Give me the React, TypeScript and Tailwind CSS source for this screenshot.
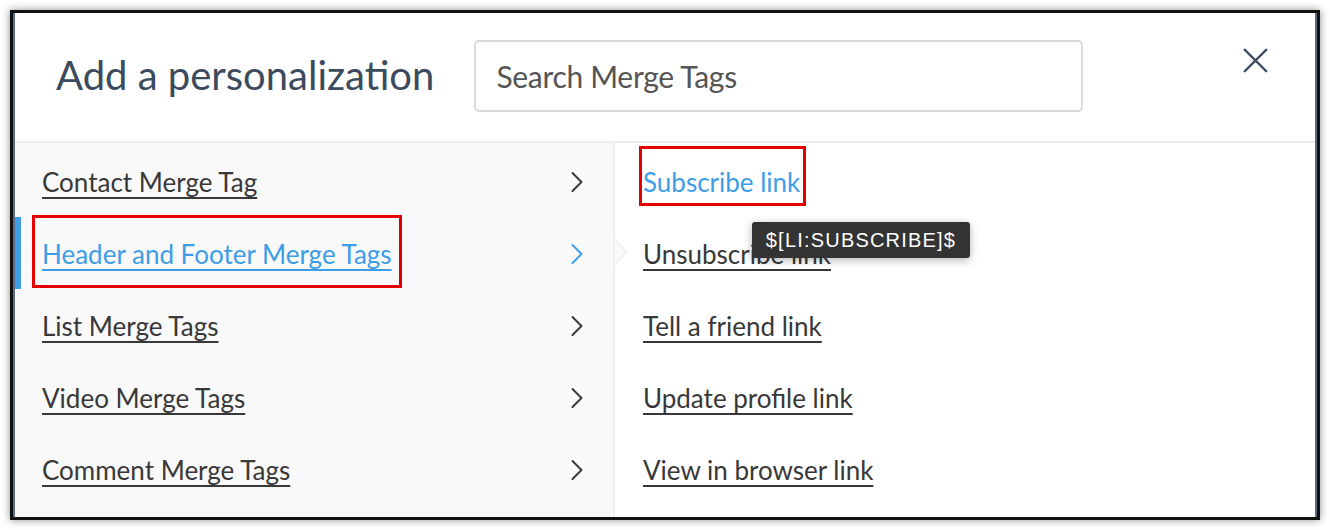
import React from 'react';
import { ChevronRight, X } from 'lucide-react';

const groups = [
  'Contact Merge Tag',
  'Header and Footer Merge Tags',
  'List Merge Tags',
  'Video Merge Tags',
  'Comment Merge Tags',
];

const links = [
  'Subscribe link',
  'Unsubscribe link',
  'Tell a friend link',
  'Update profile link',
  'View in browser link',
];

export default function App() {
  return (
    <div className="w-[1330px] h-[530px] bg-white p-[10px] font-['Lato',sans-serif]">
      <div className="w-[1310px] h-[510px] border-[3px] border-[#111] shadow-[0_0_8px_rgba(0,0,0,0.45)]">
        <div className="h-full border-x-[2px] border-[#5b6b82] bg-white flex flex-col">
          {/* header */}
          <div className="h-[130px] flex items-center border-b-2 border-[#ededed] shrink-0">
            <h1 className="ml-[41px] text-[40px] text-[#3b4a5c] leading-none mt-[-4px]">Add a personalization</h1>
            <div className="ml-[40px] w-[609px] h-[72px] border-2 border-[#dadada] rounded-[5px] flex items-center px-[20px] mt-[-2px]">
              <span className="text-[30px] text-[#555] tracking-[-0.3px]">Search Merge Tags</span>
            </div>
            <button className="ml-auto mr-[38px] self-start mt-[26px] text-[#3b4a5c]">
              <X className="w-[43px] h-[43px]" strokeWidth={1.35} />
            </button>
          </div>

          {/* body */}
          <div className="flex flex-1 min-h-0">
            <div className="w-[600px] bg-[#f9f9f9] border-r-2 border-[#f0f0f0] pt-[3px]">
              {groups.map((g, i) => {
                const active = i === 1;
                return (
                  <div key={g} className="relative h-[72px] flex items-center">
                    {active && <div className="absolute left-0 top-[-1px] bottom-[1px] w-[6px] bg-[#3d9de6]" />}
                    <span
                      className={`ml-[27px] text-[26px] underline underline-offset-[5px] decoration-2 ${
                        active ? 'text-[#3d9de6]' : 'text-[#383838]'
                      }`}
                    >
                      {g}
                    </span>
                    <ChevronRight
                      className={`ml-auto mr-[18px] w-[36px] h-[36px] ${active ? 'text-[#3d9de6]' : 'text-[#383838]'}`}
                      strokeWidth={1.3}
                    />
                    {active && (
                      <>
                        <div className="absolute left-[17px] top-[-3px] w-[370px] h-[73px] border-[3px] border-[#e40000]" />
                        <div className="absolute right-[-14px] top-[20px] w-0 h-0 border-y-[14px] border-y-transparent border-l-[12px] border-l-[#f0f0f0]" />
                        <div className="absolute right-[-12px] top-[22px] w-0 h-0 border-y-[12px] border-y-transparent border-l-[10px] border-l-[#f9f9f9]" />
                      </>
                    )}
                  </div>
                );
              })}
            </div>

            <div className="flex-1 pt-[3px] relative">
              {links.map((l, i) => (
                <div key={l} className="relative h-[72px] flex items-center">
                  <span
                    className={`ml-[28px] text-[26px] ${
                      i === 0
                        ? 'text-[#3d9de6]'
                        : 'text-[#383838] underline underline-offset-[5px] decoration-2'
                    }`}
                  >
                    {l}
                  </span>
                  {i === 0 && (
                    <div className="absolute left-[24px] top-0 w-[167px] h-[60px] border-[3px] border-[#e40000]" />
                  )}
                  {i === 0 && (
                    <div className="absolute left-[137px] top-[76px] h-[36px] w-[218px] flex items-center justify-center rounded-[3px] bg-[#333] shadow-[0_2px_8px_rgba(0,0,0,0.3)] text-white text-[20px] tracking-[1.2px] font-['Liberation_Sans',sans-serif] z-10">
                      $[LI:SUBSCRIBE]$
                    </div>
                  )}
                </div>
              ))}
            </div>
          </div>
        </div>
      </div>
    </div>
  );
}
